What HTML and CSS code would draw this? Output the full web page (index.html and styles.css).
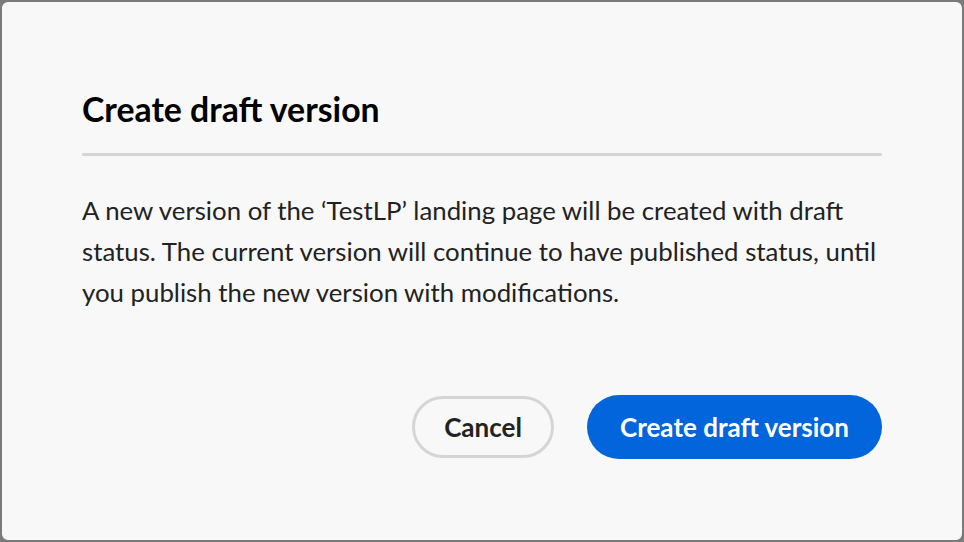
FILE: index.html
```html
<!DOCTYPE html>
<html lang="en">
<head>
<meta charset="utf-8">
<title>Create draft version</title>
<link rel="stylesheet" href="styles.css">
</head>
<body>
<div class="dialog" role="dialog" aria-labelledby="dlg-title">
  <h2 class="dialog-title" id="dlg-title">Create draft version</h2>
  <hr class="dialog-divider">
  <p class="dialog-body">A new version of the ‘TestLP’ landing page will be created with draft status. The current version will continue to have published status, until you publish the new version with modifications.</p>
  <div class="dialog-actions">
    <button class="btn btn-secondary" type="button">Cancel</button>
    <button class="btn btn-primary" type="button">Create draft version</button>
  </div>
</div>
</body>
</html>
```
FILE: styles.css
```css
html, body {
  margin: 0;
  padding: 0;
  background: #7b7b7b;
}
body {
  font-family: Lato, "Open Sans", "Liberation Sans", sans-serif;
}
.dialog {
  box-sizing: border-box;
  width: 964px;
  height: 542px;
  border: 2px solid #7b7b7b;
  border-radius: 8px;
  background: #f8f8f8;
  padding: 87px 80px 0 80px;
  display: flex;
  flex-direction: column;
}
.dialog-title {
  margin: 0;
  font-size: 33.8px;
  line-height: 40px;
  font-weight: 700;
  color: #000;
}
.dialog-divider {
  margin: 24px 0 0 0;
  border: 0;
  height: 3px;
  background: #d5d5d5;
  border-radius: 2px;
}
.dialog-body {
  margin: 34px 0 0 0;
  font-size: 25.8px;
  line-height: 41px;
  color: #222;
}
.dialog-actions {
  margin-top: 82px;
  display: flex;
  justify-content: flex-end;
  gap: 33px;
}
.btn {
  font-family: inherit;
  font-size: 26px;
  font-weight: 700;
  border-radius: 32px;
  cursor: pointer;
  box-sizing: border-box;
  padding: 0;
}
.btn-secondary {
  width: 142px;
  height: 62px;
  margin-top: 1px;
  background: transparent;
  border: 3px solid #d5d5d5;
  color: #222;
}
.btn-primary {
  width: 295px;
  height: 64px;
  background: #0265dc;
  border: 0;
  color: #fff;
}
```
